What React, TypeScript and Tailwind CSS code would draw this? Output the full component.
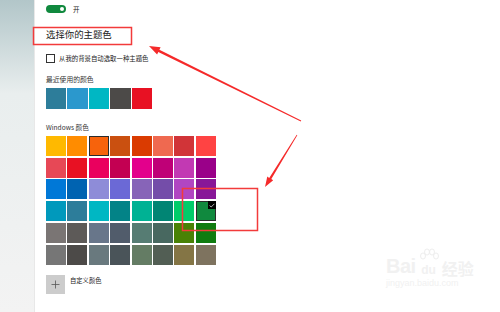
const FONT = { fontFamily: '"Noto Sans CJK SC", "Noto Sans", sans-serif' };

const RECENT = ["#2d7d9a", "#2b98cd", "#00b7c3", "#4c4a48", "#e81123"];

const PALETTE = [
  ["#ffb900", "#ff8c00", "#f7630c", "#ca5010", "#da3b01", "#ef6950", "#d13438", "#ff4343"],
  ["#e74856", "#e81123", "#ea005e", "#c30052", "#e3008c", "#bf0077", "#c239b3", "#9a0089"],
  ["#0078d7", "#0063b1", "#8e8cd8", "#6b69d6", "#8764b8", "#744da9", "#b146c2", "#881798"],
  ["#0099bc", "#2d7d9a", "#00b7c3", "#038387", "#00b294", "#018574", "#00cc6a", "#10893e"],
  ["#7a7574", "#5d5a58", "#68768a", "#515c6b", "#567c73", "#486860", "#498205", "#107c10"],
  ["#767676", "#4c4a48", "#69797e", "#4a5459", "#647c64", "#525e54", "#847545", "#7e735f"],
];

// tapered arrow from tail to tip
function arrow(tx: number, ty: number, px: number, py: number, head: number, hw: number) {
  const dx = px - tx;
  const dy = py - ty;
  const len = Math.hypot(dx, dy);
  const ux = dx / len;
  const uy = dy / len;
  const nx = -uy;
  const ny = ux;
  const bx = px - ux * head;
  const by = py - uy * head;
  const pts = [
    [tx + nx * 0.4, ty + ny * 0.4],
    [bx + nx * 1.2, by + ny * 1.2],
    [bx + nx * hw, by + ny * hw],
    [px, py],
    [bx - nx * hw, by - ny * hw],
    [bx - nx * 1.2, by - ny * 1.2],
    [tx - nx * 0.4, ty - ny * 0.4],
  ];
  return pts.map((p) => p.map((v) => v.toFixed(1)).join(",")).join(" ");
}

function Annotations() {
  return (
    <svg className="pointer-events-none absolute left-0 top-0" width="500" height="312">
      <rect x="33.5" y="27.5" width="98" height="17" fill="none" stroke="#f23b3b" strokeWidth="1.5" />
      <rect x="182.5" y="188.5" width="75" height="42" fill="none" stroke="#f23b3b" strokeWidth="1.5" />
      <polygon points={arrow(301, 121, 149, 46, 11, 4)} fill="#f52a2a" />
      <polygon points={arrow(297, 135, 265, 187, 10, 3.5)} fill="#f52a2a" />
    </svg>
  );
}

function Watermark() {
  return (
    <div className="pointer-events-none absolute left-[386px] top-[256px] flex flex-col items-start text-[#f1f1f1]">
      <div className="flex items-end gap-[2px] leading-none">
        <span className="text-[20px] font-bold tracking-tight" style={{ fontFamily: '"Liberation Sans", sans-serif' }}>
          Bai
        </span>
        <span className="relative flex h-[20px] w-[22px] items-end justify-center">
          <svg className="absolute left-0 top-[-8px]" width="22" height="14" viewBox="0 0 22 14">
            <ellipse cx="5" cy="8" rx="2.5" ry="3" fill="none" stroke="#eeeeee" strokeWidth="1" />
            <ellipse cx="9" cy="4" rx="2.5" ry="3" fill="none" stroke="#eeeeee" strokeWidth="1" />
            <ellipse cx="14" cy="4" rx="2.5" ry="3" fill="none" stroke="#eeeeee" strokeWidth="1" />
            <ellipse cx="18" cy="8" rx="2.5" ry="3" fill="none" stroke="#eeeeee" strokeWidth="1" />
          </svg>
          <span className="text-[12px] font-bold" style={{ fontFamily: '"Liberation Sans", sans-serif' }}>
            du
          </span>
        </span>
        <span className="text-[16px] font-bold" style={FONT}>
          经验
        </span>
      </div>
      <span className="mt-[3px] text-[9px] leading-none" style={{ fontFamily: '"Liberation Sans", sans-serif' }}>
        jingyan.baidu.com
      </span>
    </div>
  );
}

export default function App() {
  return (
    <div className="relative flex h-[312px] w-[500px] overflow-hidden bg-white text-[#222]" style={FONT}>
      {/* side strip */}
      <div className="h-full w-[35px] border-r border-[#e8e8e8] bg-gradient-to-b from-[#b2c6c9] via-[#e9eeee] via-30% to-[#f3f3f3]" />

      <div className="flex flex-1 flex-col pl-[11px]">
        {/* toggle */}
        <div className="mt-[5px] flex items-center gap-[7px]">
          <div className="flex h-[8px] w-[20px] items-center justify-end rounded-full bg-[#10893e] pr-[2px]">
            <div className="h-[4px] w-[4px] rounded-full bg-white" />
          </div>
          <span className="text-[6.5px] leading-none">开</span>
        </div>

        <div className="mt-[17px] text-[9.4px] leading-none">选择你的主题色</div>

        <div className="mt-[15px] flex items-center gap-[4px]">
          <div className="h-[9px] w-[9px] border border-[#333]" />
          <span className="text-[6.4px] leading-none">从我的背景自动选取一种主题色</span>
        </div>

        <div className="mt-[13px] text-[6.8px] leading-none text-[#333]">最近使用的颜色</div>

        <div className="mt-[5px] flex gap-[1.3px]">
          {RECENT.map((c) => (
            <div key={c} className="h-[21px] w-[20.2px]" style={{ background: c }} />
          ))}
        </div>

        <div className="mt-[15px] text-[6.6px] leading-none text-[#333]">Windows 颜色</div>

        <div className="mt-[5px] grid w-max grid-cols-[repeat(8,20px)] gap-x-[1.4px] gap-y-[1.8px]">
          {PALETTE.flatMap((row, r) =>
            row.map((c, i) => {
              const framed = (r === 0 && i === 2) || (r === 3 && i === 7);
              return (
                <div
                  key={`${r}-${i}`}
                  className={"relative h-[20px] w-[20px] " + (framed ? "border-[1.5px] border-[#2b2b2b]" : "")}
                  style={{ background: c }}
                >
                  {r === 3 && i === 7 && (
                    <div className="absolute right-[-1px] top-[-1px] flex h-[8px] w-[8px] items-center justify-center bg-black">
                      <svg width="6" height="5" viewBox="0 0 6 5">
                        <path d="M0.6 2.6 L2.2 4 L5.4 0.8" fill="none" stroke="#ddd" strokeWidth="0.8" />
                      </svg>
                    </div>
                  )}
                </div>
              );
            }),
          )}
        </div>

        <div className="mt-[10px] flex items-start gap-[5px]">
          <div className="flex h-[19px] w-[19px] items-center justify-center bg-[#cccccc]">
            <svg width="9" height="9" viewBox="0 0 9 9">
              <path d="M4.5 0.5 V8.5 M0.5 4.5 H8.5" stroke="#555" strokeWidth="0.8" />
            </svg>
          </div>
          <span className="mt-[3px] text-[6.3px] leading-none">自定义颜色</span>
        </div>
      </div>

      <Watermark />
      <Annotations />
    </div>
  );
}
